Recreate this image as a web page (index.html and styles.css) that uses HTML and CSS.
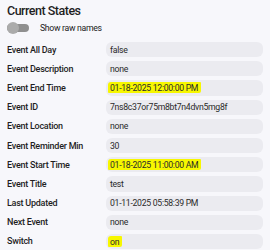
FILE: index.html
```html
<!DOCTYPE html>
<html lang="en">
<head>
  <meta charset="UTF-8">
  <title>Current States</title>
  <link rel="stylesheet" href="styles.css">
</head>
<body>
  <div class="card">
    <h1 class="title">Current States</h1>

    <div class="toggle-row">
      <div class="switch"><div class="thumb"></div></div>
      <div class="toggle-label">Show raw names</div>
    </div>

    <div class="states">
      <div class="label">Event All Day</div>
      <div class="value">false</div>

      <div class="label">Event Description</div>
      <div class="value">none</div>

      <div class="label">Event End Time</div>
      <div class="value"><span class="mark">01-18-2025 12:00:00 PM</span></div>

      <div class="label">Event ID</div>
      <div class="value">7ns8c37or75m8bt7n4dvn5mg8f</div>

      <div class="label">Event Location</div>
      <div class="value">none</div>

      <div class="label">Event Reminder Min</div>
      <div class="value">30</div>

      <div class="label">Event Start Time</div>
      <div class="value"><span class="mark">01-18-2025 11:00:00 AM</span></div>

      <div class="label">Event Title</div>
      <div class="value">test</div>

      <div class="label">Last Updated</div>
      <div class="value">01-11-2025 05:58:39 PM</div>

      <div class="label">Next Event</div>
      <div class="value">none</div>

      <div class="label">Switch</div>
      <div class="value"><span class="mark">on</span></div>
    </div>
  </div>
</body>
</html>
```

FILE: styles.css
```css
body {
  margin: 0;
  background-color: #f7f7fb;
  font-family: Roboto, "Liberation Sans", sans-serif;
  color: #1f1f1f;
}

.card {
  padding: 3px 7px 0 7px;
}

.title {
  margin: 0;
  font-size: 12.5px;
  font-weight: 500;
  letter-spacing: -0.5px;
  line-height: 15px;
}

.toggle-row {
  display: grid;
  grid-template-columns: 22px auto;
  justify-content: start;
  align-items: center;
  column-gap: 11px;
  margin-top: 4px;
  height: 12px;
}

.switch {
  position: relative;
  width: 22px;
  height: 8px;
  border-radius: 4px;
  background-color: #8f8f8f;
}

.switch .thumb {
  position: absolute;
  left: 0;
  top: -2px;
  width: 12px;
  height: 12px;
  border-radius: 50%;
  background-color: #ababab;
}

.toggle-label {
  font-size: 8.7px;
  letter-spacing: -0.3px;
  line-height: 12px;
  color: #222;
}

.states {
  display: grid;
  grid-template-columns: 99px 157px;
  row-gap: 4px;
  margin-top: 8px;
}

.label {
  display: flex;
  align-items: center;
  font-size: 9px;
  font-weight: 500;
  letter-spacing: -0.25px;
  color: #1f1f1f;
}

.value {
  display: flex;
  align-items: center;
  height: 15.2px;
  padding-left: 4px;
  border-radius: 6px;
  background-color: #ebebf0;
  font-size: 8.7px;
  letter-spacing: -0.3px;
  color: #2a2a2a;
}

.mark {
  background-color: #f7f700;
  padding: 1px 3px 0 2px;
  margin-left: -2px;
  border-radius: 3px 1px 2px 1px;
}
```
